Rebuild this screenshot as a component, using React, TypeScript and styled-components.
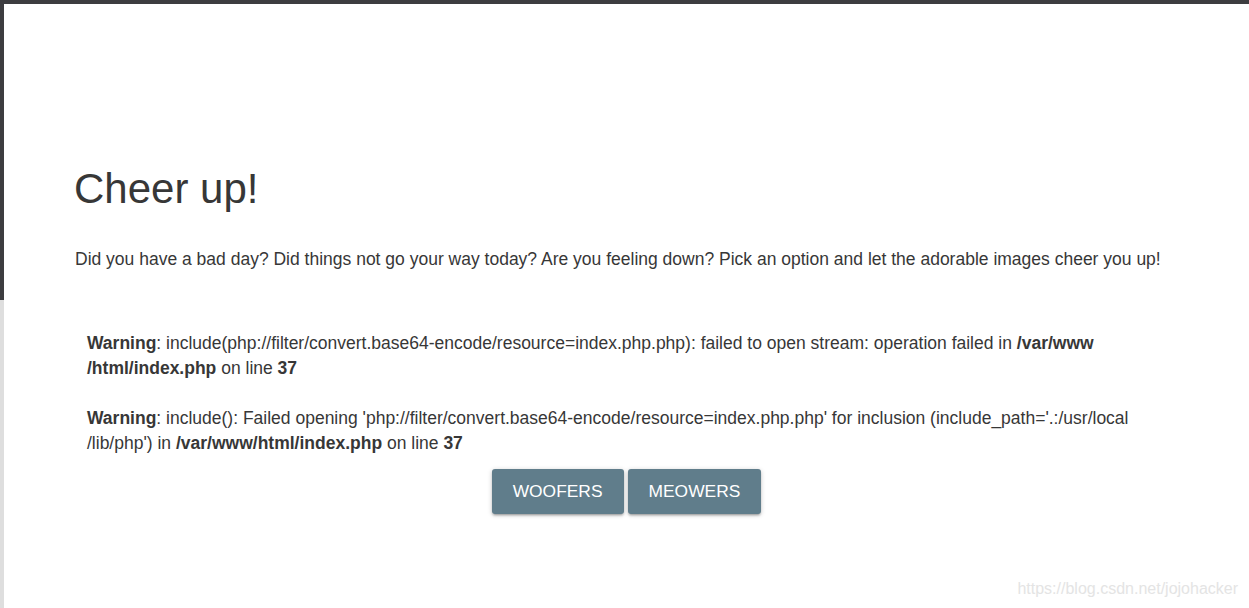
import React from "react";
import styled, { createGlobalStyle } from "styled-components";

const Global = createGlobalStyle`
  html, body { margin: 0; padding: 0; background: #ffffff; }
  body { font-family: "Liberation Sans", Arial, sans-serif; color: #373737; }
`;

const Screen = styled.div`
  width: 1249px;
  height: 608px;
  display: flex;
  flex-direction: column;
  overflow: hidden;
  position: relative;
`;

const TopBar = styled.div`
  height: 4px;
  flex: none;
  background: #3d3d40;
`;

const Body = styled.div`
  flex: 1;
  display: flex;
`;

const SideEdge = styled.div`
  width: 4px;
  flex: none;
  background: linear-gradient(to bottom, #3d3d40 0, #3d3d40 296px, #dedede 296px);
`;

const Content = styled.main`
  flex: 1;
  padding: 160px 0 0 70px;
`;

const Title = styled.h1`
  margin: 0;
  font-size: 42px;
  font-weight: 400;
  line-height: 50px;
  color: #373737;
`;

const Lead = styled.p`
  margin: 33px 0 0 1px;
  font-size: 17.5px;
  line-height: 25px;
`;

const Notices = styled.div`
  margin: 59px 0 0 13px;
  width: 1080px;
  font-size: 17.5px;
  line-height: 25px;
`;

const Notice = styled.p`
  margin: 0 0 25px;
  &:last-child { margin-bottom: 0; }
  b { font-weight: 700; }
`;

const Actions = styled.div`
  display: flex;
  justify-content: center;
  gap: 4px;
  margin: 13px 0 0 -10px;
  padding-right: 60px;
`;

const Button = styled.button`
  height: 45px;
  padding: 0 21px;
  border: none;
  border-radius: 3px;
  background: #607d8b;
  color: #ffffff;
  font-family: "Liberation Sans", Arial, sans-serif;
  font-size: 17.4px;
  text-transform: uppercase;
  box-shadow: 0 2px 2px 0 rgba(0,0,0,0.14), 0 3px 1px -2px rgba(0,0,0,0.12), 0 1px 5px 0 rgba(0,0,0,0.2);
  cursor: pointer;
`;

const Watermark = styled.div`
  position: absolute;
  right: 11px;
  bottom: 10px;
  font-size: 16px;
  color: #e4e4e4;
`;

export default function App() {
  return (
    <Screen>
      <Global />
      <TopBar />
      <Body>
        <SideEdge />
        <Content>
          <Title>Cheer up!</Title>
          <Lead>
            Did you have a bad day? Did things not go your way today? Are you feeling down? Pick an option and let the adorable images cheer you up!
          </Lead>
          <Notices>
            <Notice>
              <b>Warning</b>: include(php://filter/convert.base64-encode/resource=index.php.php): failed to open stream: operation failed in <b>/var/www</b>
              <br />
              <b>/html/index.php</b> on line <b>37</b>
            </Notice>
            <Notice>
              <b>Warning</b>: include(): Failed opening 'php://filter/convert.base64-encode/resource=index.php.php' for inclusion (include_path='.:/usr/local
              <br />
              /lib/php') in <b>/var/www/html/index.php</b> on line <b>37</b>
            </Notice>
          </Notices>
          <Actions>
            <Button>Woofers</Button>
            <Button>Meowers</Button>
          </Actions>
        </Content>
      </Body>
      <Watermark>https://blog.csdn.net/jojohacker</Watermark>
    </Screen>
  );
}
